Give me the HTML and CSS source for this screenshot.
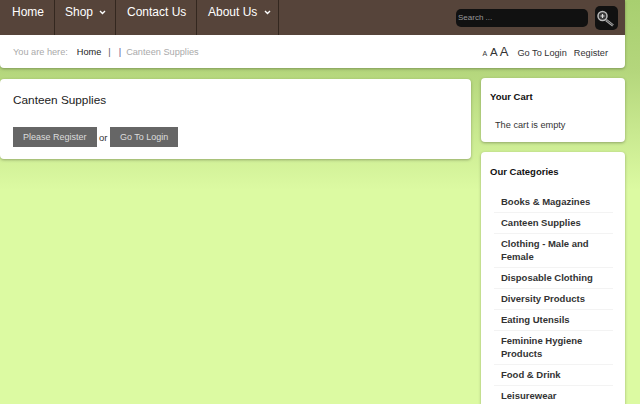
FILE: index.html
```html
<!DOCTYPE html>
<html lang="en">
<head>
    <meta charset="UTF-8">
    <title>Canteen Supplies</title>
    <link rel="stylesheet" href="styles.css">
</head>
<body>
    <div class="wrap">
        <div class="top-box">
            <div class="nav-bar">
                <ul class="nav">
                    <li class="nav-home"><a href="#">Home</a></li>
                    <li class="nav-shop"><a href="#">Shop <svg class="caret" width="7" height="5" viewBox="0 0 7 5"><path d="M1 1l2.5 2.5L6 1" fill="none" stroke="#fff" stroke-width="1.4"/></svg></a></li>
                    <li class="nav-contact"><a href="#">Contact Us</a></li>
                    <li class="nav-about"><a href="#">About Us <svg class="caret" width="7" height="5" viewBox="0 0 7 5"><path d="M1 1l2.5 2.5L6 1" fill="none" stroke="#fff" stroke-width="1.4"/></svg></a></li>
                </ul>
                <form class="search">
                    <input class="search-input" type="text" placeholder="Search ...">
                    <button class="search-btn" type="button">
                        <svg width="23" height="24" viewBox="0 0 23 24">
                            <path d="M11 14l7 5.5" stroke="#aaa" stroke-width="2.6"/>
                            <path d="M11.5 14.300l6.500 5" stroke="#333" stroke-width="0.8"/>
                            <circle cx="7.500" cy="10" r="4.500" fill="#3a3a3a" stroke="#bbb" stroke-width="1.500"/>
                            <path d="M5.500 10h4M7.500 8v4" stroke="#ddd" stroke-width="1.200"/>
                        </svg>
                    </button>
                </form>
            </div>
            <div class="crumb-bar">
                <div class="crumbs">
                    <span class="here">You are here:</span>
                    <a class="crumb-link" href="#">Home</a>
                    <span class="sep">|</span>
                    <span class="sep sep2">|</span>
                    <span class="current">Canteen Supplies</span>
                </div>
                <div class="tools">
                    <span class="size-s">A</span>
                    <span class="size-m">A</span>
                    <span class="size-l">A</span>
                    <a class="tool-link" href="#">Go To Login</a>
                    <a class="tool-link" href="#">Register</a>
                </div>
            </div>
        </div>

        <div class="columns">
            <div class="card main">
                <h1>Canteen Supplies</h1>
                <div class="actions">
                    <a class="btn" href="#">Please Register</a>
                    <span>or</span>
                    <a class="btn" href="#">Go To Login</a>
                </div>
            </div>
            <div class="side">
                <div class="card cart">
                    <h3>Your Cart</h3>
                    <p>The cart is empty</p>
                </div>
                <div class="card cats">
                    <h3>Our Categories</h3>
                    <ul class="cat-list">
                        <li><a href="#">Books &amp; Magazines</a></li>
                        <li><a href="#">Canteen Supplies</a></li>
                        <li><a href="#">Clothing - Male and Female</a></li>
                        <li><a href="#">Disposable Clothing</a></li>
                        <li><a href="#">Diversity Products</a></li>
                        <li><a href="#">Eating Utensils</a></li>
                        <li><a href="#">Feminine Hygiene Products</a></li>
                        <li><a href="#">Food &amp; Drink</a></li>
                        <li><a href="#">Leisurewear</a></li>
                    </ul>
                </div>
            </div>
        </div>
    </div>
</body>
</html>
```

FILE: styles.css
```css
html, body {
    height: 404px;
    overflow: hidden;
}

body {
    margin: 0;
    font-family: "Liberation Sans", Arial, sans-serif;
    font-size: 11px;
    color: #333;
    background: linear-gradient(#a8cf70 0, #b4d67c 70px, #dcfaa2 190px);
    background-color: #dcfaa2;
}

a {
    text-decoration: none;
    color: inherit;
}

ul {
    list-style: none;
    margin: 0;
    padding: 0;
}

.wrap {
    width: 625px;
}

.top-box {
    background-color: #fff;
    border-radius: 0 0 4px 4px;
    box-shadow: 0 1px 3px rgba(0, 0, 0, 0.3);
}

.nav-bar {
    height: 35px;
    background-color: #56443a;
    display: flex;
    justify-content: space-between;
    align-items: center;
}

.nav {
    display: flex;
    height: 35px;
}

.nav li {
    border-right: 1px solid #33271f;
    display: flex;
    align-items: center;
    box-sizing: border-box;
    font-size: 12px;
    color: #fff;
    padding-bottom: 11px;
}

.nav-home {
    width: 55px;
    padding-left: 12px;
}

.nav-shop {
    width: 61px;
    padding-left: 10px;
}

.nav-contact {
    width: 81px;
    padding-left: 11px;
}

.nav-about {
    width: 82px;
    padding-left: 11px;
}

.caret {
    margin-left: 3px;
    vertical-align: 1px;
}

.search {
    display: flex;
    align-items: center;
    gap: 7px;
    margin-right: 7px;
}

.search-input {
    width: 132px;
    height: 18px;
    box-sizing: border-box;
    padding: 0 2px;
    background-color: #111;
    border: none;
    border-radius: 5px;
    font-family: inherit;
    font-size: 8px;
    color: #999;
}

.search-input::placeholder {
    color: #999;
}

.search-btn {
    width: 23px;
    height: 24px;
    padding: 0;
    background-color: #111;
    border: none;
    border-radius: 5px;
    display: flex;
    align-items: center;
    justify-content: center;
}

.crumb-bar {
    height: 33px;
    display: flex;
    justify-content: space-between;
    align-items: center;
    padding: 0 17px 0 13px;
}

.crumbs {
    display: flex;
    align-items: center;
    font-size: 9.2px;
}

.here {
    color: #aaa;
    margin-right: 9px;
}

.crumb-link {
    color: #222;
}

.sep {
    color: #555;
    margin-left: 7px;
}

.sep2 {
    color: #55468a;
    margin-left: 8px;
}

.current {
    color: #aaa;
    margin-left: 5px;
}

.tools {
    display: flex;
    align-items: baseline;
    color: #333;
    font-size: 9.2px;
}

.size-s {
    font-size: 7px;
    margin-right: 3px;
}

.size-m {
    font-size: 11.5px;
    margin-right: 2px;
}

.size-l {
    font-size: 13px;
    margin-right: 9px;
}

.tool-link {
    margin-right: 7px;
}

.tool-link:last-child {
    margin-right: 0;
}

.columns {
    display: flex;
    justify-content: space-between;
    align-items: flex-start;
    margin-top: 10px;
}

.card {
    background-color: #fff;
    border-radius: 4px;
    box-shadow: 0 1px 3px rgba(0, 0, 0, 0.3);
}

.main {
    width: 471px;
    height: 80px;
    box-sizing: border-box;
    padding: 14px 13px;
    margin-top: 1px;
}

.main h1 {
    margin: 0 0 20px 0;
    font-size: 11.8px;
    font-weight: normal;
    color: #222;
    line-height: 14px;
}

.actions {
    display: flex;
    align-items: center;
    gap: 2.5px;
    font-size: 9.5px;
}

.btn {
    display: block;
    padding: 0 10px;
    height: 20px;
    line-height: 20px;
    background-color: #666;
    color: #ddd;
    font-size: 9px;
}

.side {
    width: 144px;
    display: flex;
    flex-direction: column;
    gap: 10px;
}

.card h3 {
    margin: 0;
    font-size: 9.5px;
    color: #111;
}

.cart {
    height: 64px;
    box-sizing: border-box;
    padding: 13px 9px;
}

.cart p {
    margin: 18px 0 0 5px;
    font-size: 9.2px;
}

.cats {
    padding: 14px 12px 0 9px;
}

.cat-list {
    margin: 15px 0 0 4px;
}

.cat-list li {
    border-bottom: 1px solid #f3f3f3;
    padding: 3px 0 4px 7px;
    font-size: 9.5px;
    font-weight: bold;
    line-height: 13px;
    color: #333;
}
```
